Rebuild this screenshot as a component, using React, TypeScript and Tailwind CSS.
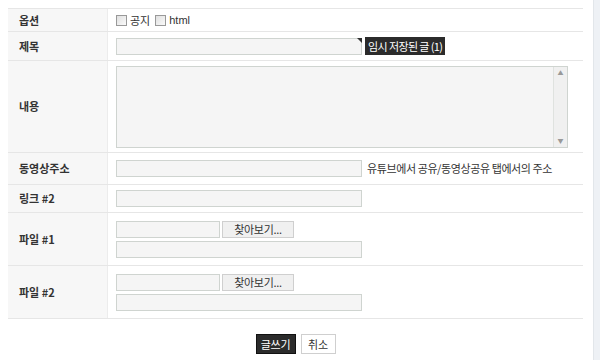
import React from "react";

const font = { fontFamily: '"Noto Sans CJK KR", "Noto Sans", sans-serif' };

function Row({ label, h, children }: { label: string; h: string; children: React.ReactNode }) {
  return (
    <div className={`flex border-b border-[#e6e6e6] ${h}`}>
      <div className="w-[100px] shrink-0 bg-[#f7f7f7] border-r border-[#ececec] flex items-center pl-[11px] text-[11px] font-bold text-[#333]">
        {label}
      </div>
      <div className="flex-1 pl-[8px] flex flex-col justify-center">{children}</div>
    </div>
  );
}

function Input({ w = "w-[246px]" }: { w?: string }) {
  return <div className={`${w} h-[17px] border border-[#cfd4d0] bg-[#f5f5f5]`} />;
}

function FileRow() {
  return (
    <div className="flex flex-col gap-[3px]">
      <div className="flex items-center gap-[2px]">
        <div className="w-[104px] h-[17px] border border-[#cfd4d0] bg-[#f5f5f5]" />
        <div className="w-[72px] h-[17px] border border-[#cfcfcf] bg-[#f0f0f0] flex items-center justify-center text-[11px] tracking-[-0.3px] text-[#333] leading-none">
          찾아보기...
        </div>
      </div>
      <Input />
    </div>
  );
}

function Check() {
  return <span className="inline-block w-[11px] h-[11px] border border-[#999] bg-gradient-to-br from-[#e0e0e0] to-[#fafafa]" />;
}

export default function App() {
  return (
    <div className="w-[600px] h-[360px] bg-white relative overflow-hidden" style={font}>
      <div className="absolute right-0 top-0 bottom-0 w-[7px] bg-[#eef1f5] border-l border-[#e2e6ea]" />
      <div className="pt-[8px] pl-[8px] w-[583px]">
        <div className="border-t border-[#e6e6e6]">
          <Row label="옵션" h="h-[23px]">
            <div className="flex items-center gap-[3px] text-[11px] text-[#333] leading-none">
              <Check />
              <span className="mr-[2px]">공지</span>
              <Check />
              <span style={{ fontFamily: '"Liberation Sans", sans-serif' }}>html</span>
            </div>
          </Row>
          <Row label="제목" h="h-[29px]">
            <div className="flex items-center gap-[3px]">
              <div className="relative">
                <Input />
                <div className="absolute right-0 top-0 w-0 h-0 border-t-[5px] border-l-[5px] border-t-[#333] border-l-transparent" />
              </div>
              <div className="bg-[#2b2b2b] text-white text-[11px] tracking-[-0.6px] h-[18px] px-[3px] flex items-center leading-none">
                임시 저장된 글 (1)
              </div>
            </div>
          </Row>
          <Row label="내용" h="h-[92px]">
            <div className="w-[452px] h-[82px] border border-[#cfd4d0] bg-[#f5f5f5] flex justify-end">
              <div className="w-[14px] h-full border-l border-[#dfe2df] bg-[#f0f0f0] flex flex-col justify-between items-center py-[3px] text-[6px] text-[#999] leading-none">
                <span>▲</span>
                <span>▼</span>
              </div>
            </div>
          </Row>
          <Row label="동영상주소" h="h-[32px]">
            <div className="flex items-center gap-[5px]">
              <Input />
              <span className="text-[11px] tracking-[-0.4px] text-[#333] leading-none">유튜브에서 공유/동영상공유 탭에서의 주소</span>
            </div>
          </Row>
          <Row label="링크 #2" h="h-[28px]">
            <Input />
          </Row>
          <Row label="파일 #1" h="h-[53px]">
            <FileRow />
          </Row>
          <Row label="파일 #2" h="h-[53px]">
            <FileRow />
          </Row>
        </div>
        <div className="flex justify-center gap-[5px] mt-[15px] pl-[0px]">
          <div className="w-[40px] h-[20px] bg-[#2b2b2b] border border-[#111] text-white text-[11px] tracking-[-0.3px] flex items-center justify-center leading-none">
            글쓰기
          </div>
          <div className="w-[35px] h-[20px] bg-white border border-[#cfcfcf] text-[#333] text-[11px] flex items-center justify-center leading-none">
            취소
          </div>
        </div>
      </div>
    </div>
  );
}
